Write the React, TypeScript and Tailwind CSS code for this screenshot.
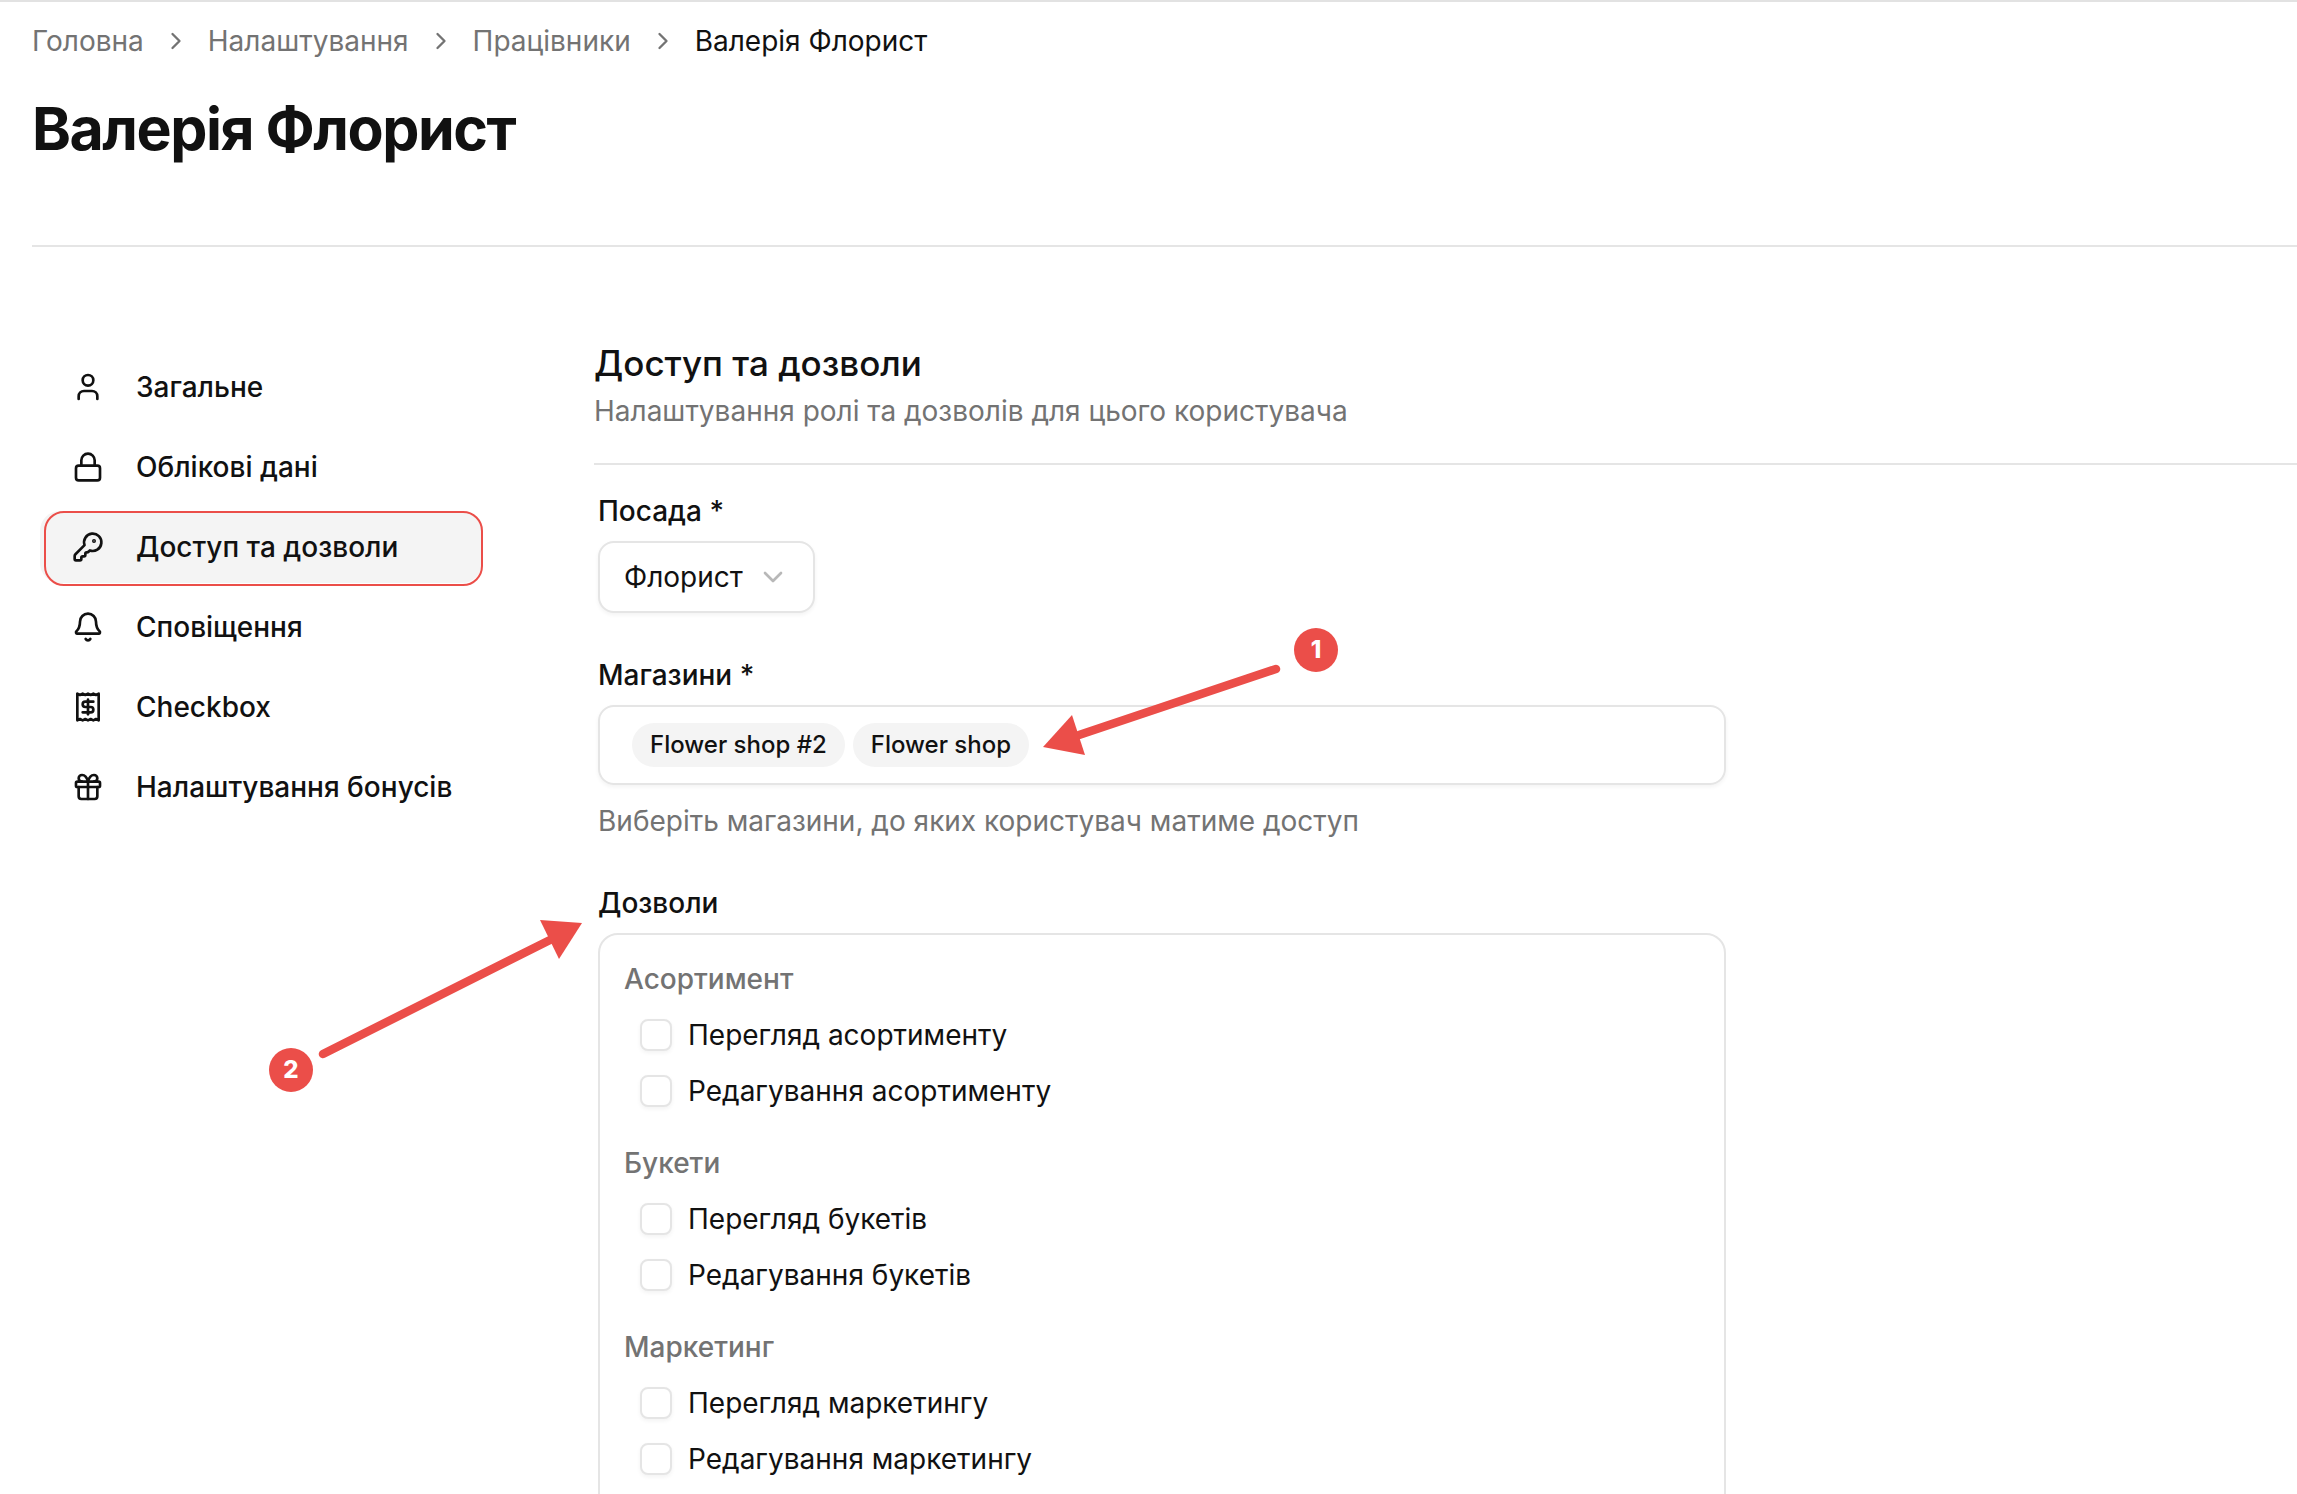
import { useState } from "react";
import {
  Bell,
  ChevronDown,
  ChevronRight,
  Gift,
  KeyRound,
  Lock,
  Receipt,
  User,
} from "lucide-react";
import { clsx } from "clsx";

const crumbs = ["Головна", "Налаштування", "Працівники"];

const navItems = [
  { title: "Загальне", icon: User },
  { title: "Облікові дані", icon: Lock },
  { title: "Доступ та дозволи", icon: KeyRound, active: true },
  { title: "Сповіщення", icon: Bell },
  { title: "Checkbox", icon: Receipt },
  { title: "Налаштування бонусів", icon: Gift },
];

const shops = ["Flower shop #2", "Flower shop"];

const permissionGroups = [
  {
    title: "Асортимент",
    permissions: ["Перегляд асортименту", "Редагування асортименту"],
  },
  {
    title: "Букети",
    permissions: ["Перегляд букетів", "Редагування букетів"],
  },
  {
    title: "Маркетинг",
    permissions: ["Перегляд маркетингу", "Редагування маркетингу"],
  },
];

const Breadcrumbs = () => (
  <nav aria-label="breadcrumb">
    <ol className="flex items-center gap-[18px] text-[28px] leading-10 text-[#737373]">
      {crumbs.map((crumb) => (
        <li key={crumb} className="flex items-center gap-[18px]">
          <a href="#">{crumb}</a>
          <ChevronRight size={28} strokeWidth={2} />
        </li>
      ))}
      <li className="text-[#111111]" aria-current="page">
        Валерія Флорист
      </li>
    </ol>
  </nav>
);

const Sidebar = () => (
  <nav className="w-[442px] shrink-0">
    <ul className="space-y-2">
      {navItems.map(({ title, icon: Icon, active }) => (
        <li key={title}>
          <a
            href="#"
            className={clsx(
              "relative flex h-18 items-center gap-8 rounded-[20px] px-8 text-[28px] font-medium whitespace-nowrap",
              active && "bg-[#f4f4f4]"
            )}
          >
            <Icon size={32} strokeWidth={2} className="shrink-0" />
            <span>{title}</span>
            {active && (
              <span className="absolute -right-px -bottom-[3px] top-0 left-1 rounded-[20px] border-2 border-[#eb4e49]" />
            )}
          </a>
        </li>
      ))}
    </ul>
  </nav>
);

const Permission = ({ title }: { title: string }) => {
  const [checked, setChecked] = useState(false);

  return (
    <label className="flex h-14 items-center gap-4 text-[28px]">
      <input
        type="checkbox"
        checked={checked}
        onChange={(e) => setChecked(e.target.checked)}
        className="size-8 appearance-none rounded-lg border-2 border-[#e5e5e5] bg-white shadow-[0_2px_4px_rgba(0,0,0,0.05)] checked:bg-[#111111]"
      />
      {title}
    </label>
  );
};

const Marker = ({ label, className }: { label: string; className: string }) => (
  <span
    className={clsx(
      "absolute grid size-11 place-items-center rounded-full bg-[#eb4e49] text-2xl font-extrabold text-white",
      className
    )}
  >
    {label}
  </span>
);

const App = () => {
  return (
    <div className="h-screen overflow-hidden border-t-2 border-[#e2e2e2] bg-white pl-8 font-['Inter','Liberation_Sans',sans-serif] text-[#111111]">
      <header className="border-b-2 border-[#e5e5e5] pt-[19px] pb-20">
        <Breadcrumbs />
        <h1 className="mt-8 text-[59px] leading-[72px] font-bold tracking-tight">
          Валерія Флорист
        </h1>
      </header>

      <div className="flex pt-23 pl-2">
        <div className="pt-3">
          <Sidebar />
        </div>

        <main className="min-w-0 flex-1 pl-28">
          <h2 className="text-[35px] leading-[48px] font-medium">
            Доступ та дозволи
          </h2>
          <p className="text-[28px] leading-[48px] text-[#737373]">
            Налаштування ролі та дозволів для цього користувача
          </p>
          <hr className="mt-7 border-t-2 border-[#e5e5e5]" />

          <form className="mt-[26px] ml-1 w-[1128px] max-w-full">
            <label
              htmlFor="position"
              className="block text-[28px] leading-10 font-medium"
            >
              Посада *
            </label>
            <div className="relative mt-2.5 w-fit">
              <select
                id="position"
                className="block h-18 w-[217px] appearance-none rounded-2xl border-2 border-[#e5e5e5] bg-white px-6 text-[28px] shadow-[0_2px_4px_rgba(0,0,0,0.05)]"
              >
                <option>Флорист</option>
              </select>
              <ChevronDown
                size={32}
                className="pointer-events-none absolute top-5 right-[26px] text-[#b8b8b8]"
              />
            </div>

            <label
              htmlFor="shops"
              className="mt-[42px] block text-[28px] leading-10 font-medium"
            >
              Магазини *
            </label>
            <div className="relative mt-2.5">
              <button
                id="shops"
                type="button"
                className="flex h-20 w-full items-center gap-2 rounded-2xl border-2 border-[#e5e5e5] px-8 shadow-[0_2px_4px_rgba(0,0,0,0.05)]"
              >
                {shops.map((shop) => (
                  <span
                    key={shop}
                    className="rounded-full bg-[#f4f4f4] px-[18px] py-1.5 text-2xl font-medium"
                  >
                    {shop}
                  </span>
                ))}
              </button>
              <div className="pointer-events-none absolute -top-[77px] left-[445px] h-32 w-[295px]">
                <svg viewBox="0 0 295 128" className="size-full">
                  <path
                    d="M233 41 36 107"
                    stroke="#eb4e49"
                    strokeWidth="8.5"
                    strokeLinecap="round"
                  />
                  <path d="M0 119 29 87 42 127Z" fill="#eb4e49" />
                </svg>
                <Marker label="1" className="top-0 right-0" />
              </div>
            </div>
            <p className="mt-4 text-[28px] leading-10 text-[#737373]">
              Виберіть магазини, до яких користувач матиме доступ
            </p>

            <h3 className="mt-[42px] text-[28px] leading-10 font-medium">
              Дозволи
            </h3>
            <div className="relative mt-2.5 rounded-[20px] border-2 border-[#e5e5e5] p-6">
              {permissionGroups.map((group) => (
                <fieldset key={group.title} className="mb-6">
                  <legend className="text-[28px] leading-10 font-medium text-[#737373]">
                    {group.title}
                  </legend>
                  <div className="pt-2 pl-4">
                    {group.permissions.map((permission) => (
                      <Permission key={permission} title={permission} />
                    ))}
                  </div>
                </fieldset>
              ))}
              <div className="pointer-events-none absolute -top-[15px] -left-[331px] h-[172px] w-[313px]">
                <svg viewBox="0 0 313 172" className="size-full">
                  <path
                    d="M54 134 281 20"
                    stroke="#eb4e49"
                    strokeWidth="8.5"
                    strokeLinecap="round"
                  />
                  <path d="M313 3 271 0 290 39Z" fill="#eb4e49" />
                </svg>
                <Marker label="2" className="bottom-0 left-0" />
              </div>
            </div>
          </form>
        </main>
      </div>
    </div>
  );
};

export default App;
